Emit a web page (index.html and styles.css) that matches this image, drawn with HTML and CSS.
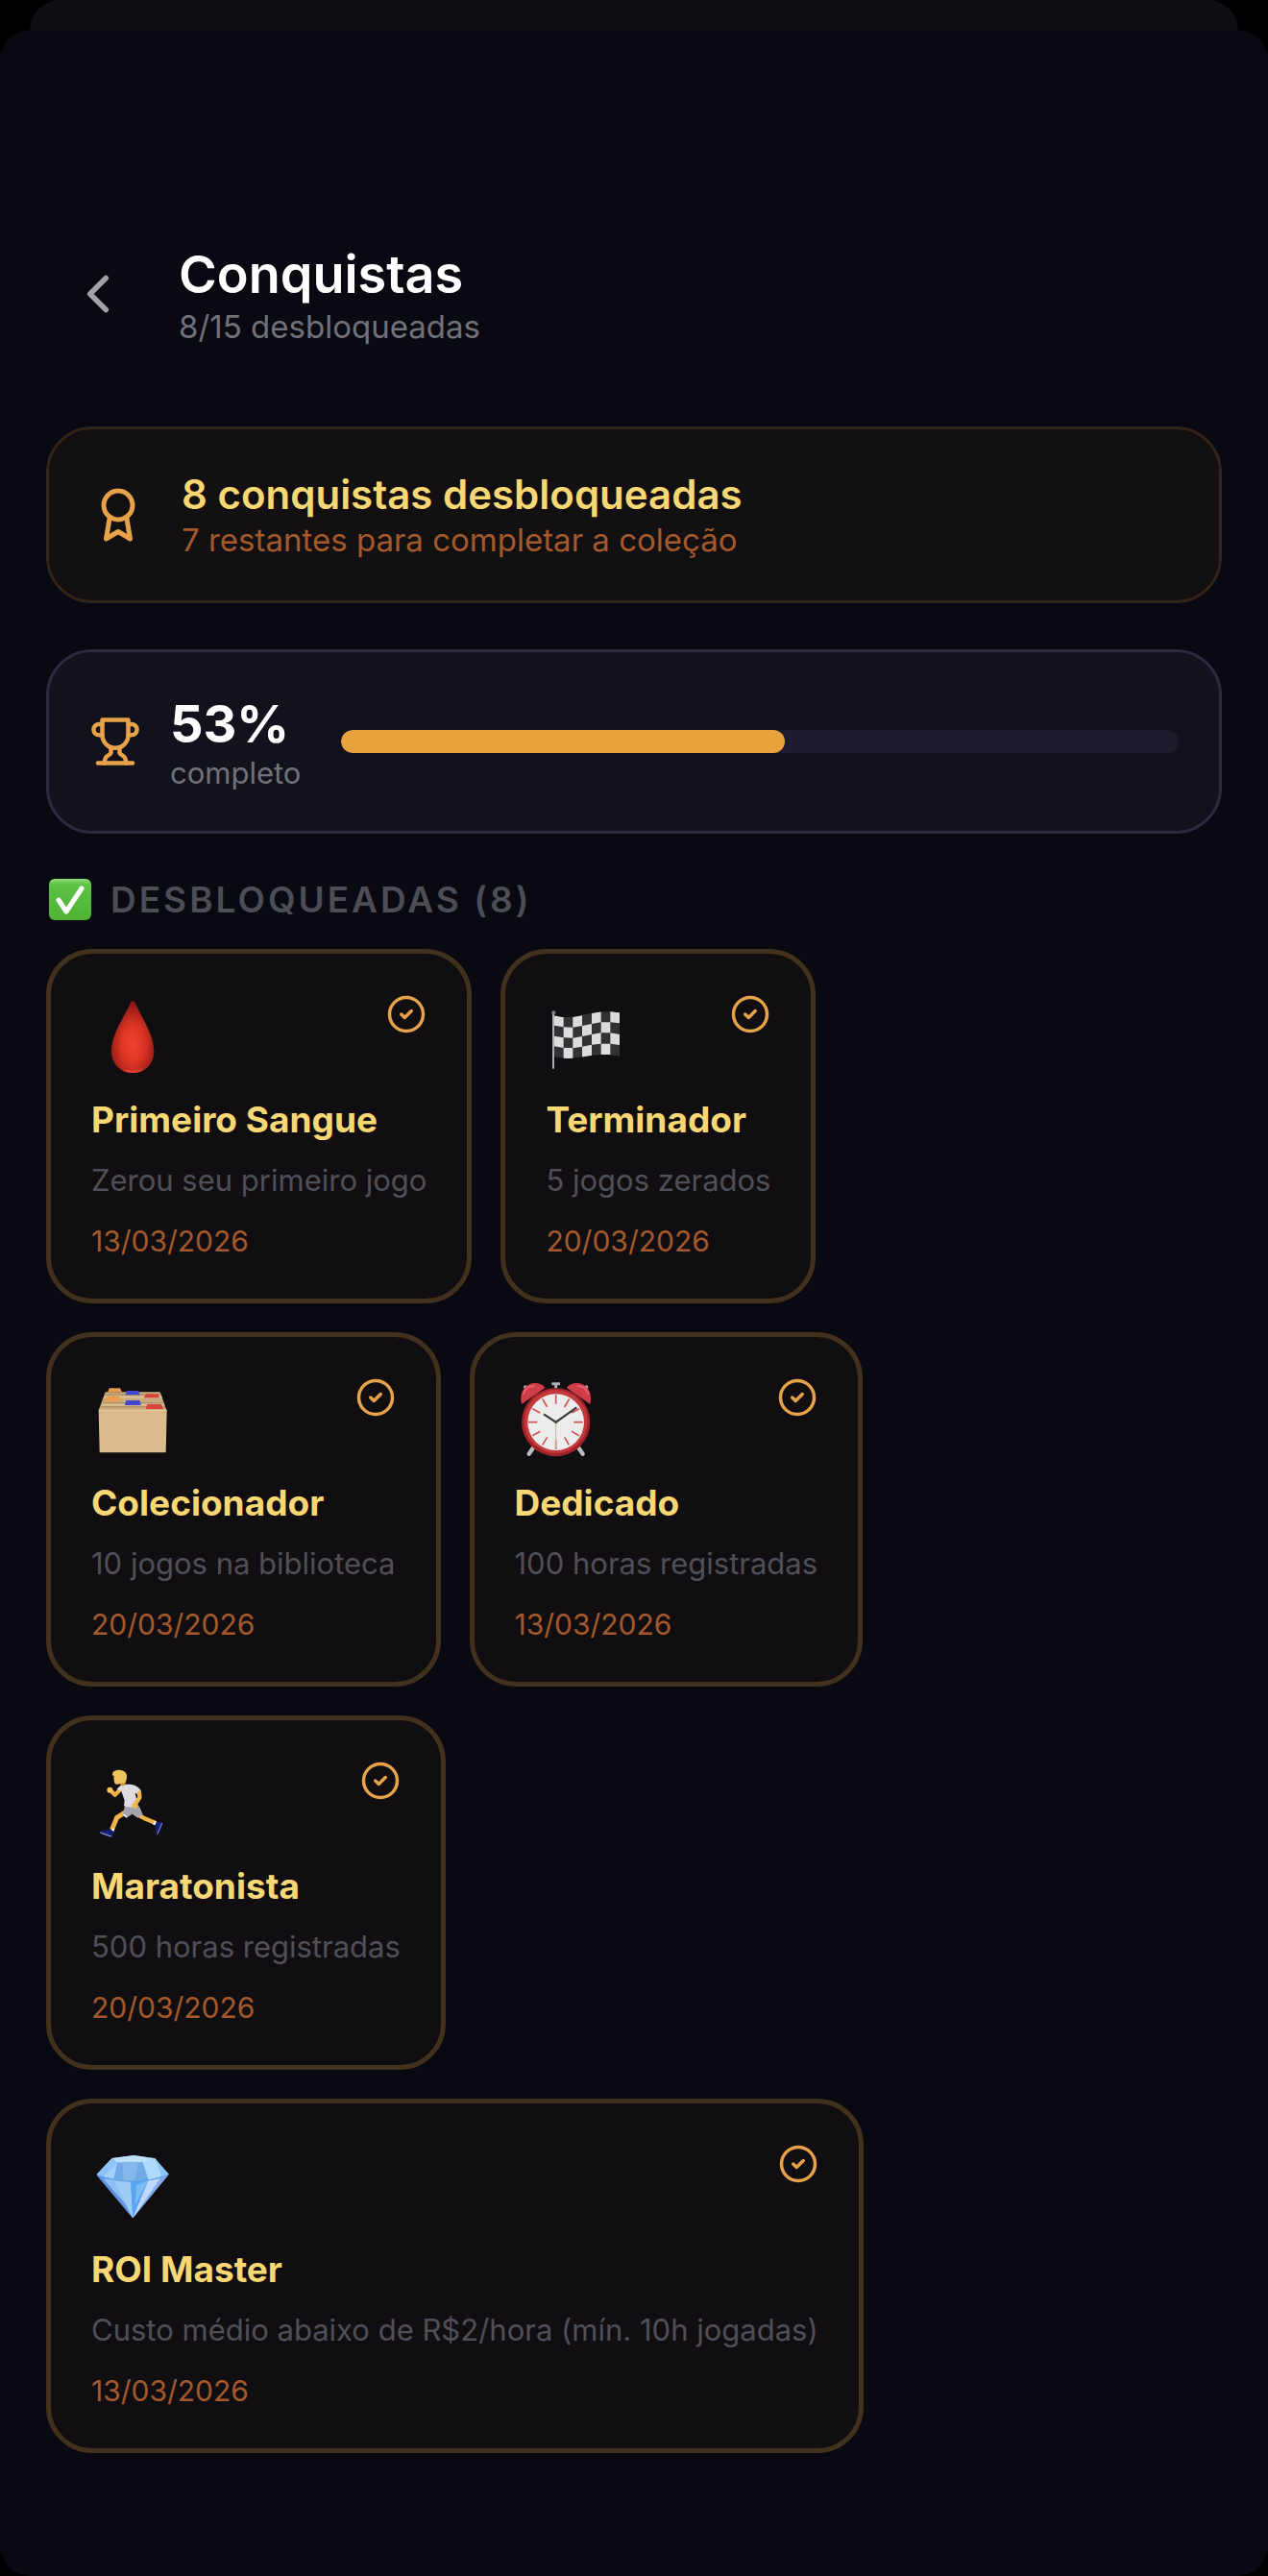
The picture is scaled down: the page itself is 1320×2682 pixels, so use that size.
FILE: index.html
```html
<!DOCTYPE html>
<html lang="pt-BR">
<head>
    <meta charset="UTF-8">
    <meta name="viewport" content="width=device-width, initial-scale=1">
    <title>Conquistas</title>
    <link rel="stylesheet" href="styles.css">
</head>
<body>
    <!-- check icon used by every unlocked card -->
    <svg class="defs" width="0" height="0" aria-hidden="true">
        <symbol id="check" viewBox="0 0 24 24">
            <circle cx="12" cy="12" r="10"/>
            <path d="m9 12 2 2 4-4"/>
        </symbol>
    </svg>
    <div class="sheet-back"></div>
    <main class="sheet">
        <header class="header">
            <button class="back" type="button" aria-label="Voltar">
                <svg class="icon" viewBox="0 0 24 24"><path d="m15 18-6-6 6-6"/></svg>
            </button>
            <div>
                <h1 class="title">Conquistas</h1>
                <p class="subtitle">8/15 desbloqueadas</p>
            </div>
        </header>

        <section class="banner">
            <svg class="icon banner-icon" viewBox="0 0 24 24">
                <circle cx="12" cy="8" r="6"/>
                <path d="M15.477 12.89 17 22l-5-3-5 3 1.523-9.11"/>
            </svg>
            <div>
                <h2 class="banner-title">8 conquistas desbloqueadas</h2>
                <p class="banner-text">7 restantes para completar a coleção</p>
            </div>
        </section>

        <section class="progress">
            <svg class="icon progress-icon" viewBox="0 0 24 24">
                <path d="M6 9H4.5a2.5 2.5 0 0 1 0-5H6"/>
                <path d="M18 9h1.500a2.500 2.500 0 0 0 0-5H18"/>
                <path d="M4 22h16"/>
                <path d="M10 14.660V17c0 .550-.470.980-.970 1.210C7.850 18.750 7 20.240 7 22"/>
                <path d="M14 14.660V17c0 .550.470.980.970 1.210C16.150 18.750 17 20.240 17 22"/>
                <path d="M18 2H6v7a6 6 0 0 0 12 0V2Z"/>
            </svg>
            <div>
                <p class="percent">53%</p>
                <p class="percent-label">completo</p>
            </div>
            <div class="bar" role="progressbar" aria-label="completo" aria-valuenow="53" aria-valuemin="0" aria-valuemax="100">
                <div class="bar-fill" style="width: 53%"></div>
            </div>
        </section>

        <h2 class="section-title">
            <svg class="section-icon" viewBox="0 0 44 44">
                <defs>
                    <linearGradient id="green" x1="0" y1="0" x2="0" y2="1">
                        <stop offset="0" stop-color="#8fe07a"/>
                        <stop offset=".15" stop-color="#5cc344"/>
                        <stop offset="1" stop-color="#4fb236"/>
                    </linearGradient>
                </defs>
                <rect width="44" height="43" rx="6" fill="url(#green)"/>
                <path d="m10 22 8 12L34 10" fill="none" stroke="#fff" stroke-width="5" stroke-linecap="round" stroke-linejoin="round"/>
            </svg>
            DESBLOQUEADAS (8)
        </h2>

        <div class="list">
            <div class="row">
                <article class="card">
                    <div class="card-top">
                        <svg class="emoji" viewBox="45 45 252 252">
                            <defs>
                                <radialGradient id="blood" cx=".5" cy=".6" r=".55">
                                    <stop offset="0" stop-color="#f0432f"/>
                                    <stop offset=".5" stop-color="#dc3424"/>
                                    <stop offset="1" stop-color="#8f1a14"/>
                                </radialGradient>
                                <linearGradient id="rim" x1="0" y1="0" x2="0" y2="1">
                                    <stop offset=".75" stop-color="#f04a36" stop-opacity="0"/>
                                    <stop offset="1" stop-color="#f04a36"/>
                                </linearGradient>
                            </defs>
                            <path d="M175 67c5 0 8 6 11 13 18 41 55 92 55 144 0 40-29 67-66 67s-67-27-67-67c0-52 37-103 56-144 3-7 6-13 11-13Z" fill="url(#blood)"/>
                            <path d="M110 238c8 25 34 40 65 40s57-15 64-40c-5 32-31 53-64 53s-60-21-65-53Z" fill="url(#rim)"/>
                        </svg>
                        <svg class="icon check"><use href="#check"/></svg>
                    </div>
                    <h3 class="card-title">Primeiro Sangue</h3>
                    <p class="card-text">Zerou seu primeiro jogo</p>
                    <time class="card-date" datetime="2026-03-13">13/03/2026</time>
                </article>

                <article class="card">
                    <div class="card-top">
                        <svg class="emoji" viewBox="39 45 252 252">
                            <defs>
                                <clipPath id="flag">
                                    <path d="M66 112c65 20 115-25 204-9v137c-85-20-135 20-204 0Z"/>
                                </clipPath>
                            </defs>
                            <g clip-path="url(#flag)">
                                <path d="M60 90h220v165H60z" fill="#323234"/>
                                <g fill="#dcdcdd">
                                    <path d="M66 112l29 5v31l-29-5zM66 176l29 5v32l-29-5z"/>
                                    <path d="M95 148l29 1v33l-29-1zM95 213l29 0v34l-29 0z"/>
                                    <path d="M124 117l29-5v32l-29 5zM124 182l29-5v32l-29 5z"/>
                                    <path d="M153 144l30-6v33l-30 6zM153 209l30-6v35l-30 5z"/>
                                    <path d="M183 105l29-6v34l-29 5zM183 171l29-5v34l-29 3z"/>
                                    <path d="M212 133l29 0v33l-29 0zM212 200l29 0v34l-29 0z"/>
                                    <path d="M241 98l30 5v33l-30-3zM241 166l30 5v33l-30-4z"/>
                                </g>
                            </g>
                            <path d="M63 104v174" stroke="#a9afb9" stroke-width="6"/>
                            <circle cx="64" cy="103" r="6" fill="#7f8691"/>
                        </svg>
                        <svg class="icon check"><use href="#check"/></svg>
                    </div>
                    <h3 class="card-title">Terminador</h3>
                    <p class="card-text">5 jogos zerados</p>
                    <time class="card-date" datetime="2026-03-20">20/03/2026</time>
                </article>
            </div>

            <div class="row">
                <article class="card">
                    <div class="card-top">
                        <svg class="emoji" viewBox="45 42 252 252">
                            <path d="M89 88h171l20 57H68Z" fill="#c9aa7d"/>
                            <path d="M86 96h178M80 122h192M76 134h200" stroke="#a98b62" stroke-width="3"/>
                            <path d="M84 104h182M78 128h194" stroke="#e0c297" stroke-width="5"/>
                            <path d="m97 88 4-12h34l6 12Z" fill="#eb9a4e"/>
                            <path d="m151 97 5-13h36l5 13Z" fill="#3f49cf"/>
                            <path d="m210 106 5-12h39l4 12Z" fill="#d8443c"/>
                            <path d="m87 117 6-15h38l8 15Z" fill="#eb9a4e"/>
                            <path d="m149 129 5-15h42l5 15Z" fill="#3f49cf"/>
                            <path d="m215 141 5-15h44l6 15Z" fill="#d8443c"/>
                            <path d="M68 143h213l-3 134H71Z" fill="#dbbb8e"/>
                            <path d="M69 145h211" stroke="#e8cba1" stroke-width="3"/>
                        </svg>
                        <svg class="icon check"><use href="#check"/></svg>
                    </div>
                    <h3 class="card-title">Colecionador</h3>
                    <p class="card-text">10 jogos na biblioteca</p>
                    <time class="card-date" datetime="2026-03-20">20/03/2026</time>
                </article>

                <article class="card">
                    <div class="card-top">
                        <svg class="emoji" viewBox="70 42 252 252">
                            <path d="m130 258-16 23M266 258l16 23" stroke="#b9bec4" stroke-width="13" stroke-linecap="round"/>
                            <path d="M185 62h26M198 62v25" stroke="#aab0b6" stroke-width="9"/>
                            <circle cx="103" cy="73" r="6" fill="#aab0b6"/>
                            <circle cx="293" cy="73" r="6" fill="#aab0b6"/>
                            <path d="M91 126c-8-30 5-58 32-65 16-3 35 2 41 14Z" fill="#cf3b47"/>
                            <path d="M305 126c8-30-5-58-32-65-16-3-35 2-41 14Z" fill="#cf3b47"/>
                            <path d="M97 93c5-15 17-24 33-23M299 93c-5-15-17-24-33-23" fill="none" stroke="#e0626c" stroke-width="6" stroke-linecap="round"/>
                            <circle cx="198" cy="182" r="107" fill="#9f2329"/>
                            <circle cx="198" cy="180" r="99" fill="#c4393c"/>
                            <circle cx="198" cy="182" r="88" fill="#ececec"/>
                            <g stroke="#d35457" stroke-width="5">
                                <path d="M198 97v28M198 238v28M112 182h28M254 182h28"/>
                                <path d="m156 109 15 26M225 229l14 24M240 109l-15 26M171 229l-15 24M125 140l24 13M247 211l24 13M271 140l-24 13M149 211l-24 13"/>
                            </g>
                            <path d="M198 182v80" stroke="#cdbb9c" stroke-width="3"/>
                            <path d="m160 157 38 25 65-46" fill="none" stroke="#34383a" stroke-width="6"/>
                            <circle cx="198" cy="181" r="5" fill="#444"/>
                        </svg>
                        <svg class="icon check"><use href="#check"/></svg>
                    </div>
                    <h3 class="card-title">Dedicado</h3>
                    <p class="card-text">100 horas registradas</p>
                    <time class="card-date" datetime="2026-03-13">13/03/2026</time>
                </article>
            </div>

            <div class="row">
                <article class="card">
                    <div class="card-top">
                        <svg class="emoji" viewBox="45 39 252 252">
                            <path d="m140 125-21 21-15-15" fill="none" stroke="#eeb044" stroke-width="13" stroke-linecap="round" stroke-linejoin="round"/>
                            <circle cx="103" cy="131" r="9" fill="#f5c45c"/>
                            <path d="m157 197-32 20-14 34" fill="none" stroke="#f0b347" stroke-width="15" stroke-linecap="round" stroke-linejoin="round"/>
                            <path d="m190 208 22 12 32 13" fill="none" stroke="#f0b347" stroke-width="13" stroke-linecap="round"/>
                            <path d="m150 180 42-2c6 9 11 22 14 30l-16 10-17-12-18 12-12-9Z" fill="#a3a3aa"/>
                            <path d="m146 207 10 9" stroke="#fff" stroke-width="4"/>
                            <path d="M136 117c14-5 33-5 46 0 10 4 14 11 19 17l-13 10-6-4 8 35-1 8c-13 3-30 2-42-2l2-18-10-28-14-7Z" fill="#dcdce1"/>
                            <path d="m195 140 1 15-14 21" fill="none" stroke="#f2b84b" stroke-width="13" stroke-linecap="round" stroke-linejoin="round"/>
                            <circle cx="181" cy="179" r="9" fill="#f2b84b"/>
                            <path d="M133 100h20l-3 17-12 2Z" fill="#dd9a38"/>
                            <path d="M116 84c-1 11 0 17 2 25 2 6 12 5 18 2l16-8V80Z" fill="#f6c35f"/>
                            <path d="M112 86c-4-11 6-18 20-18 17 0 26 11 24 24-1 9-4 16-8 17-6-1-10-5-11-16-8-2-16-8-25-7Z" fill="#eec45b"/>
                            <path d="m106 257 6-7 6 3-3 8ZM241 228l7 3-1 10-9-1Z" fill="#f4f4f8"/>
                            <path d="M75 257c10 2 20 0 31-4l9 9-4 16c-14 1-32-8-39-15Z" fill="#151f78"/>
                            <path d="m73 264 35 12" stroke="#aab0d8" stroke-width="3"/>
                            <path d="M248 232c7 2 12-3 19-1 1 14-7 30-14 39l-6-4-3-24Z" fill="#151f78"/>
                            <path d="m266 234-14 35" stroke="#8f96c4" stroke-width="3"/>
                        </svg>
                        <svg class="icon check"><use href="#check"/></svg>
                    </div>
                    <h3 class="card-title">Maratonista</h3>
                    <p class="card-text">500 horas registradas</p>
                    <time class="card-date" datetime="2026-03-20">20/03/2026</time>
                </article>
            </div>

            <div class="row">
                <article class="card">
                    <div class="card-top">
                        <svg class="emoji" viewBox="45 36 252 252">
                            <path d="m62 132 48-51 68-9 66 10 43 49-112 137Z" fill="#7fb8f3"/>
                            <path d="m110 81 68-9 66 10-36 14h-81Z" fill="#bfe0fb"/>
                            <path d="m110 81 17 15-12 51-53-15Z" fill="#a4d2fa"/>
                            <path d="m110 81 17 15-44 41-21-5Z" fill="#8dc3f6"/>
                            <path d="M127 94h80l17 55-56 5-53-7Z" fill="#6fa9e6"/>
                            <path d="m142 94 50 0-12 58-34-2Z" fill="#84b7ec"/>
                            <path d="m244 82 43 49-63 18-17-53Z" fill="#8cc6f8"/>
                            <path d="m244 82 20 55-40 12-17-53Z" fill="#b0dafb"/>
                            <path d="m62 134 53 14 59 120Z" fill="#5d94df"/>
                            <path d="m82 145 33 3 43 84Z" fill="#8fc0f5"/>
                            <path d="m115 148 53 6 6 114Z" fill="#9dcbf8"/>
                            <path d="m168 154 56-5-49 119Z" fill="#58a5ef"/>
                            <path d="m186 165 38-16-42 78Z" fill="#79bcf6"/>
                            <path d="m224 149 63-17-112 136Z" fill="#82adea"/>
                            <path d="m224 149 38-7-87 126Z" fill="#c0d8fa"/>
                            <path d="M64 134c40 14 80 20 112 20s77-7 109-20" fill="none" stroke="#5d9be4" stroke-width="3"/>
                        </svg>
                        <svg class="icon check"><use href="#check"/></svg>
                    </div>
                    <h3 class="card-title">ROI Master</h3>
                    <p class="card-text">Custo médio abaixo de R$2/hora (mín. 10h jogadas)</p>
                    <time class="card-date" datetime="2026-03-13">13/03/2026</time>
                </article>
            </div>
        </div>
    </main>
</body>
</html>
```
FILE: styles.css
```css
*{
    margin: 0;
    padding: 0;
    box-sizing: border-box;
}
body{
    min-height: 100vh;
    display: flex;
    flex-direction: column;
    background: #000000;
    color: #ffffff;
    font-family: Inter, "Liberation Sans", sans-serif;
}
.defs{
    position: absolute;
}
.sheet-back{
    height: 62px;
    margin: 0 31px -31px;
    border-radius: 32px 32px 0 0;
    background: #0d0e14;
}
.sheet{
    flex: 1;
    padding: 221px 48px 128px;
    border-radius: 32px;
    background: #080911;
}
.icon{
    flex: none;
    fill: none;
    stroke: #e7a24a;
    stroke-width: 2;
    stroke-linecap: round;
    stroke-linejoin: round;
}

/* header */
.header{
    display: flex;
    align-items: center;
    gap: 30px;
    margin-bottom: 84px;
}
.back{
    width: 108px;
    height: 108px;
    display: flex;
    align-items: center;
    justify-content: center;
    border: none;
    background: none;
    cursor: pointer;
}
.back .icon{
    width: 66px;
    height: 66px;
    stroke: #a1a1aa;
}
.title{
    font-size: 54px;
    line-height: 68px;
    font-weight: 600;
}
.subtitle{
    font-size: 33px;
    line-height: 40px;
    color: #71717a;
}

/* banner + progress */
.banner, .progress{
    display: flex;
    align-items: center;
    margin-bottom: 48px;
    padding: 42px;
    border: solid 3px #33241a;
    border-radius: 48px;
    background: #131011;
}
.banner{
    gap: 36px;
}
.banner-icon{
    width: 60px;
    height: 60px;
}
.banner-title{
    font-size: 42px;
    line-height: 52px;
    font-weight: 600;
    color: #f8d775;
}
.banner-text{
    font-size: 33px;
    line-height: 42px;
    color: #a3592c;
}
.progress{
    gap: 30px;
    border-color: #2b2a3f;
    background: #12121d;
}
.progress-icon{
    width: 54px;
    height: 54px;
}
.percent{
    font-size: 54px;
    line-height: 66px;
    font-weight: 700;
}
.percent-label{
    font-size: 31px;
    line-height: 36px;
    color: #71717a;
}
.bar{
    flex: 1;
    height: 24px;
    margin-left: 12px;
    border-radius: 12px;
    background: #1c1b2b;
    overflow: hidden;
}
.bar-fill{
    height: 100%;
    border-radius: 12px;
    background: #e7a23c;
}

/* unlocked list */
.section-title{
    display: flex;
    align-items: center;
    gap: 20px;
    margin-bottom: 30px;
    padding-left: 3px;
    font-size: 37px;
    line-height: 42px;
    font-weight: 600;
    letter-spacing: 3px;
    color: #4d4d56;
}
.section-icon{
    width: 44px;
    height: 44px;
    margin: -1px 0;
}
.list{
    display: flex;
    flex-direction: column;
    gap: 30px;
}
.row{
    display: flex;
    flex-wrap: wrap;
    gap: 30px;
}
.card{
    padding: 42px;
    border: solid 5px #42311c;
    border-radius: 48px;
    background: #110e12;
}
.card-top{
    display: flex;
    align-items: flex-start;
    justify-content: space-between;
    margin-bottom: 26px;
}
.emoji{
    width: 84px;
    height: 84px;
}
.check{
    width: 42px;
    height: 42px;
}
.card-title{
    margin-bottom: 24px;
    font-size: 37px;
    line-height: 42px;
    font-weight: 700;
    color: #f8d775;
}
.card-text{
    margin-bottom: 27px;
    font-size: 31px;
    line-height: 36px;
    color: #4f4f57;
}
.card-date{
    display: block;
    font-size: 30px;
    line-height: 36px;
    color: #a3592c;
}
```
